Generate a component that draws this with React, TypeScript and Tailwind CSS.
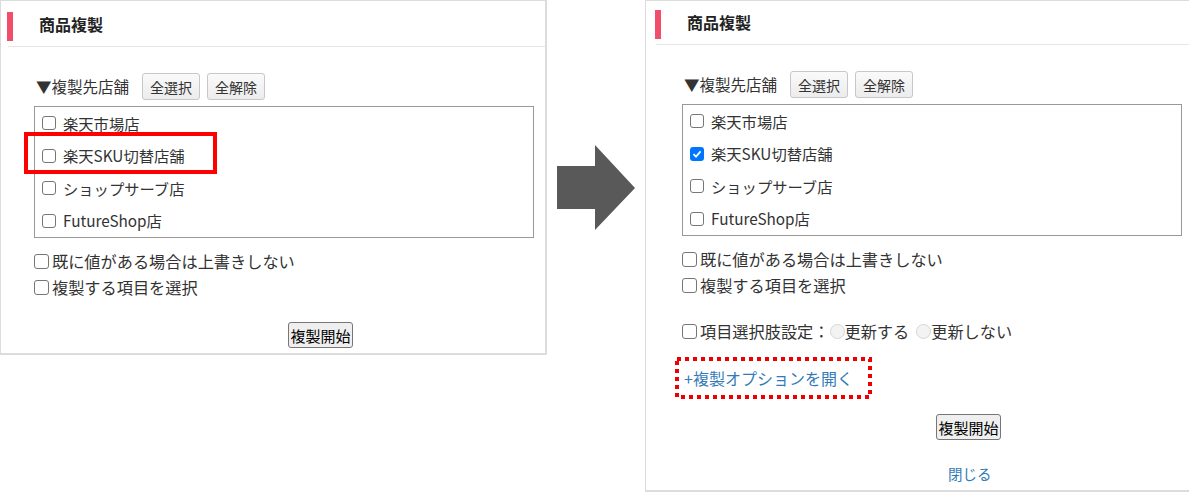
import React from "react";

const stores = ["楽天市場店", "楽天SKU切替店舗", "ショップサーブ店", "FutureShop店"];

const Check = ({ checked = false, big = false }: { checked?: boolean; big?: boolean }) =>
  checked ? (
    <span
      className={
        big
          ? "flex h-[15px] w-[15px] shrink-0 items-center justify-center rounded-[3px] bg-[#0075ff]"
          : "flex h-[14px] w-[14px] shrink-0 items-center justify-center rounded-[3px] bg-[#0075ff]"
      }
    >
      <svg width="10" height="10" viewBox="0 0 10 10">
        <path d="M1.5 5.2 L4 7.6 L8.6 2.4" fill="none" stroke="#fff" strokeWidth="1.8" />
      </svg>
    </span>
  ) : (
    <span
      className={
        big
          ? "block h-[15px] w-[15px] shrink-0 rounded-[3px] border border-[#767676] bg-white"
          : "block h-[14px] w-[14px] shrink-0 rounded-[3px] border border-[#767676] bg-white"
      }
    />
  );

const Radio = () => (
  <span className="inline-block h-[15px] w-[15px] shrink-0 rounded-full border border-[#d6d6d6] bg-[#f3f3f3]" />
);

const SmallButton = ({ label }: { label: string }) => (
  <button className="h-[27px] w-[58px] whitespace-nowrap rounded-[3px] border border-[#c8c8c8] bg-gradient-to-b from-[#fafafa] to-[#ececec] px-0 text-[14px] leading-none text-[#333]">
    {label}
  </button>
);

const StartButton = () => (
  <div className="flex">
    <button className="ml-[287px] flex h-[26px] w-[65px] items-center justify-center whitespace-nowrap rounded-[3px] border border-[#767676] bg-[#efefef] px-0 text-[15px] leading-none text-black">
      複製開始
    </button>
  </div>
);

const PanelBody = ({
  checkedIndex,
  top,
  children,
}: {
  checkedIndex: number;
  top: "left" | "right";
  children?: React.ReactNode;
}) => (
  <>
    <div className={top === "left" ? "ml-[6px] mt-[11px] flex items-start" : "ml-[6px] mt-[9px] flex items-start"}>
      <div className="h-[29px] w-[6px] bg-[#f04e6b]" />
      <div className="ml-[26px] text-[16px] font-bold leading-[24px] text-[#222]">商品複製</div>
    </div>
    <div className="ml-[7px] mt-[5px] h-px bg-[#e6e6e6]" />

    <div className="ml-[35px] mt-[26px] flex h-[27px] items-center">
      <span className="text-[15.5px] leading-none text-[#333]">▼複製先店舗</span>
      <div className="ml-[13px] flex gap-[7px]">
        <SmallButton label="全選択" />
        <SmallButton label="全解除" />
      </div>
    </div>

    <div className="ml-[33px] mt-[6px] h-[132px] w-[500px] border border-[#999]">
      {stores.map((name, i) => (
        <div key={name} className="flex h-[32.5px] items-center pl-[7px]">
          <Check checked={i === checkedIndex} />
          <span className="ml-[7px] text-[15.3px] leading-none text-[#333]">{name}</span>
        </div>
      ))}
    </div>

    <div className="ml-[33px] mt-[10px]">
      {["既に値がある場合は上書きしない", "複製する項目を選択"].map((t) => (
        <div key={t} className="flex h-[26px] items-center">
          <Check big />
          <span className="ml-[3px] text-[16.2px] leading-none text-[#333]">{t}</span>
        </div>
      ))}
    </div>

    {children}
  </>
);

export default function App() {
  return (
    <div className="flex h-[493px] w-[1189px] items-start overflow-hidden bg-white font-['Noto_Sans_CJK_JP',sans-serif]">
      {/* before */}
      <div className="relative h-[355px] w-[547px] shrink-0 border-t border-l border-r-2 border-b-2 border-[#dcdcdc] bg-white">
        <PanelBody checkedIndex={-1} top="left">
          <div className="mt-[22px]">
            <StartButton />
          </div>
        </PanelBody>
        <div className="absolute left-[23px] top-[131px] h-[42px] w-[193px] border-4 border-[#ff0000]" />
      </div>

      <svg className="ml-[10px] mt-[145px] shrink-0" width="78" height="85" viewBox="0 0 78 85">
        <polygon points="0,21 38,21 38,0 78,43 38,85 38,64 0,64" fill="#595959" />
      </svg>

      {/* after */}
      <div className="ml-[10px] h-[492px] w-[548px] shrink-0 border-t border-l border-r-2 border-b-2 border-[#dcdcdc] bg-white">
        <div className="pl-[3px]">
          <PanelBody checkedIndex={1} top="right">
            <div className="ml-[33px] mt-[20px] flex h-[26px] items-center text-[16.2px] leading-none text-[#333]">
              <Check big />
              <span className="ml-[3px]">項目選択肢設定：</span>
              <Radio />
              <span>更新する</span>
              <span className="ml-[7px] flex">
                <Radio />
              </span>
              <span>更新しない</span>
            </div>

            <div className="relative ml-[26px] mt-[13px] flex h-[42px] w-[197px] items-center pl-[9px]">
              <a className="text-[16px] leading-none text-[#337ab7]">+複製オプションを開く</a>
              <svg className="absolute inset-0" width="197" height="42" viewBox="0 0 197 42">
                <rect
                  x="2"
                  y="2"
                  width="193"
                  height="38"
                  fill="none"
                  stroke="#ee0000"
                  strokeWidth="4"
                  strokeDasharray="4 4"
                />
              </svg>
            </div>

            <div className="mt-[15px]">
              <StartButton />
            </div>

            <div className="ml-[299px] mt-[24px] text-[14.5px] leading-[20px] text-[#337ab7]">閉じる</div>
          </PanelBody>
        </div>
      </div>
    </div>
  );
}
